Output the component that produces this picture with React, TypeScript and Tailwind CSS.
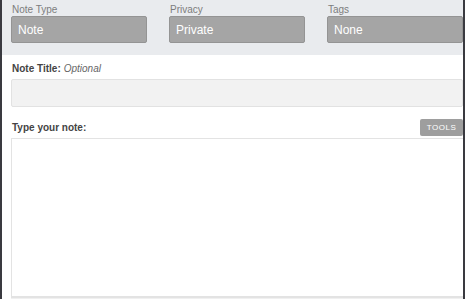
import React from "react";

export default function App() {
  const selects = [
    { label: "Note Type", value: "Note" },
    { label: "Privacy", value: "Private" },
    { label: "Tags", value: "None" },
  ];
  return (
    <div className="w-[465px] h-[299px] overflow-hidden bg-white border-l-2 border-r-2 border-[#3a3a40] font-['Liberation_Sans',Arial,sans-serif] flex flex-col">
      <div className="h-[55px] shrink-0 bg-[#e9ebee] pl-[9px] pt-[4px] grid grid-cols-3 gap-x-[22px] content-start">
        {selects.map((s) => (
          <div key={s.label} className="flex flex-col">
            <div className="text-[10px] leading-[12px] text-[#7d7d7d] pl-[1px]">{s.label}</div>
            <div className="h-[27px] rounded-[2px] bg-[#a5a5a5] border border-[#949494] flex items-center px-[6px] text-[12px] text-white">
              {s.value}
            </div>
          </div>
        ))}
      </div>
      <div className="flex-1 flex flex-col pl-[9px]">
        <div className="mt-[6px] h-[14px] flex items-center text-[10px] text-[#444] pl-[1px]">
          <span className="font-bold">Note Title:</span>
          <span className="italic text-[#666] ml-[3px]">Optional</span>
        </div>
        <div className="mt-[4px] h-[28px] bg-[#f2f2f2] border border-[#e2e2e2] rounded-[2px]" />
        <div className="mt-[12px] h-[17px] flex items-center justify-between">
          <span className="font-bold text-[10px] text-[#444] pl-[1px]">Type your note:</span>
          <div className="h-[17px] w-[43px] rounded-[2px] bg-[#9e9e9e] text-white text-[8px] tracking-[0.5px] flex items-center justify-center">
            TOOLS
          </div>
        </div>
        <div className="mt-[2px] h-[159px] bg-white border border-[#e3e3e3] border-r-0" />
        <div className="flex-1 bg-[#f0f0f0] border-t border-[#e3e3e3]" />
      </div>
    </div>
  );
}
